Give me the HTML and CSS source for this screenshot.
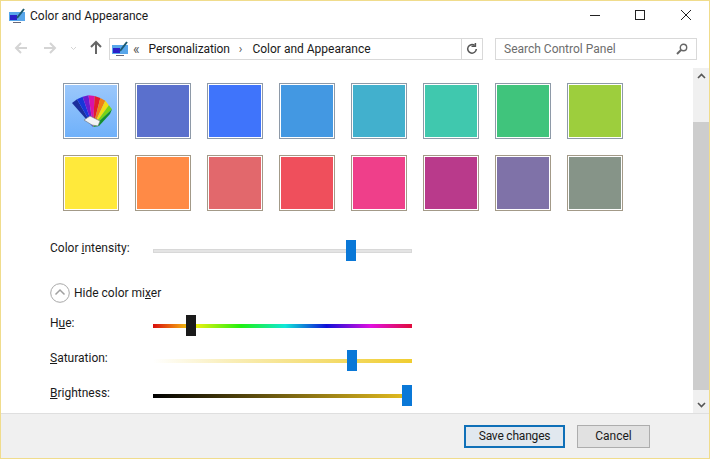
FILE: index.html
```html
<!DOCTYPE html>
<html lang="en">
<head>
    <meta charset="UTF-8">
    <title>Color and Appearance</title>
    <link rel="stylesheet" href="styles.css">
</head>
<body>
<div class="window">
    <header class="titlebar">
        <svg class="cp-icon" width="16" height="16" viewBox="0 0 16 16">
            <rect x="0" y="4" width="16" height="9" fill="#58a6ea"/>
            <rect x="1" y="7" width="7" height="5" fill="#2a20c8"/>
            <path d="M8 10 L15 1" stroke="#1c5a70" stroke-width="2"/>
            <rect x="4" y="14" width="8" height="1" fill="#667"/>
        </svg>
        <span class="title">Color and Appearance</span>
        <div class="caption-btns">
            <svg class="btn-min" width="10" height="10" viewBox="0 0 10 10"><path d="M0 5.5H10" stroke="#222"/></svg>
            <svg width="10" height="10" viewBox="0 0 10 10"><rect x="0.5" y="0.5" width="9" height="9" fill="none" stroke="#222"/></svg>
            <svg width="10" height="10" viewBox="0 0 10 10"><path d="M0 0L10 10M10 0L0 10" stroke="#222"/></svg>
        </div>
    </header>

    <nav class="navbar">
        <svg class="nav-arrow" width="16" height="14" viewBox="0 0 16 14"><path d="M14 7H3M8 2L3 7L8 12" fill="none" stroke="#d4d4d4" stroke-width="2"/></svg>
        <svg class="nav-arrow" width="16" height="14" viewBox="0 0 16 14"><path d="M2 7H13M8 2L13 7L8 12" fill="none" stroke="#d4d4d4" stroke-width="2"/></svg>
        <svg class="nav-drop" width="7" height="5" viewBox="0 0 7 5"><path d="M1 1L3.5 3.5L6 1" fill="none" stroke="#d4d4d4"/></svg>
        <svg class="nav-up" width="14" height="14" viewBox="0 0 14 14"><path d="M7 14V2M2 7L7 2L12 7" fill="none" stroke="#666" stroke-width="2"/></svg>
        <div class="address">
            <svg width="16" height="16" viewBox="0 0 16 16">
                <rect x="0" y="4" width="16" height="9" fill="#58a6ea"/>
                <rect x="1" y="7" width="7" height="5" fill="#2a20c8"/>
                <path d="M8 10 L15 1" stroke="#1c5a70" stroke-width="2"/>
                <rect x="4" y="14" width="8" height="1" fill="#667"/>
            </svg>
            <span class="crumb-more">&laquo;</span>
            <span class="crumb crumb-tight">Personalization</span>
            <span class="crumb-sep">&rsaquo;</span>
            <span class="crumb">Color and Appearance</span>
            <span class="refresh">
                <svg width="12" height="12" viewBox="0 0 12 12"><path d="M8.6 2.4A4.3 4.3 0 1 0 10.3 6" fill="none" stroke="#555" stroke-width="1.5"/><path d="M5.5 3.2H9.4V0" fill="none" stroke="#555" stroke-width="1.5"/></svg>
            </span>
        </div>
        <div class="search">
            <span>Search Control Panel</span>
            <svg width="12" height="12" viewBox="0 0 12 12"><circle cx="7.5" cy="4.5" r="3.2" fill="none" stroke="#666" stroke-width="1.4"/><path d="M5 7L1 11" stroke="#666" stroke-width="2"/></svg>
        </div>
    </nav>

    <div class="body">
        <main class="content">
            <div class="swatches">
                <div class="swatch swatch-auto">
                    <svg width="44" height="44" viewBox="0 0 44 44">
                        <g transform="translate(24 38)">
                            <path d="M0 0L-21 -24L-16 -27.7Z" fill="#1c2f9c"/>
                            <path d="M0 0L-16 -27.7L-10.4 -30.3Z" fill="#1636d8"/>
                            <path d="M0 0L-10.4 -30.3L-4.5 -31.7Z" fill="#6a1cd0"/>
                            <path d="M0 0L-4.5 -31.7L1.6 -31Z" fill="#d812a8"/>
                            <path d="M0 0L1.6 -31L7.3 -29.1Z" fill="#e41c2c"/>
                            <path d="M0 0L7.3 -29.1L12.3 -26.3Z" fill="#f08014"/>
                            <path d="M0 0L12.3 -26.3L15.9 -21.8Z" fill="#f2dc14"/>
                            <path d="M0 0L15.9 -21.8L19 -17.7Z" fill="#78d414"/>
                            <path d="M0 0L19 -17.7L17 -13L6 -1Z" fill="#14902c"/>
                            <path d="M-9 -7L-3 -11L7 -6L5 -1L-1 -2Z" fill="#f2f3f5" stroke="#6a7078" stroke-width="0.6"/>
                        </g>
                    </svg>
                </div>
                <div class="swatch" style="background:#5a70cd"></div>
                <div class="swatch" style="background:#3f74fb"></div>
                <div class="swatch" style="background:#4398e2"></div>
                <div class="swatch" style="background:#42b0cd"></div>
                <div class="swatch" style="background:#40c8ae"></div>
                <div class="swatch" style="background:#40c47c"></div>
                <div class="swatch" style="background:#9dce3d"></div>
                <div class="swatch warm" style="background:#ffe93b"></div>
                <div class="swatch warm" style="background:#ff8a46"></div>
                <div class="swatch warm" style="background:#e2686c"></div>
                <div class="swatch warm" style="background:#ef4f5c"></div>
                <div class="swatch warm" style="background:#ef3f8a"></div>
                <div class="swatch warm" style="background:#b93a8b"></div>
                <div class="swatch warm" style="background:#7f72a8"></div>
                <div class="swatch warm" style="background:#869488"></div>
            </div>

            <div class="row row-intensity">
                <label>Color <u>i</u>ntensity:</label>
                <div class="slider">
                    <div class="track track-grey"></div>
                    <div class="thumb" style="left:193px"></div>
                </div>
            </div>

            <div class="mixer-toggle">
                <svg width="20" height="20" viewBox="0 0 20 20"><circle cx="10" cy="10" r="9.3" fill="#fff" stroke="#a8a8a8"/><path d="M5.5 11.5L10 7L14.5 11.5" fill="none" stroke="#a0a0a0" stroke-width="1.5"/></svg>
                <span>Hide color mi<u>x</u>er</span>
            </div>

            <div class="row row-hue">
                <label>H<u>u</u>e:</label>
                <div class="slider">
                    <div class="track track-hue"></div>
                    <div class="thumb thumb-dark" style="left:33px"></div>
                </div>
            </div>
            <div class="row row-sat">
                <label><u>S</u>aturation:</label>
                <div class="slider">
                    <div class="track track-sat"></div>
                    <div class="thumb" style="left:194px"></div>
                </div>
            </div>
            <div class="row row-bri">
                <label><u>B</u>rightness:</label>
                <div class="slider">
                    <div class="track track-bri"></div>
                    <div class="thumb" style="left:249px"></div>
                </div>
            </div>
        </main>
        <aside class="scrollbar">
            <svg class="sb-arrow" width="9" height="6" viewBox="0 0 9 6"><path d="M1 5L4.5 1.5L8 5" fill="none" stroke="#555" stroke-width="1.6"/></svg>
            <div class="sb-thumb"></div>
            <svg class="sb-arrow" width="9" height="6" viewBox="0 0 9 6"><path d="M1 1L4.5 4.5L8 1" fill="none" stroke="#555" stroke-width="1.6"/></svg>
        </aside>
    </div>

    <footer class="footer">
        <button class="btn btn-default">Save changes</button>
        <button class="btn">Cancel</button>
    </footer>
</div>
</body>
</html>
```

FILE: styles.css
```css
* { box-sizing: border-box; }
html, body {
    margin: 0;
    height: 100%;
}
body {
    font-family: Roboto, "Liberation Sans", sans-serif;
    font-size: 12px;
    color: #1a1a1a;
    background: #fff;
}
.window {
    width: 710px;
    height: 459px;
    display: flex;
    flex-direction: column;
    border: 1px solid #f0dc8c;
    background: #fff;
    overflow: hidden;
}

.titlebar {
    height: 29px;
    flex: none;
    display: flex;
    align-items: center;
    padding-left: 8px;
}
.title { margin-left: 5px; }
.caption-btns {
    margin-left: auto;
    margin-bottom: 1px;
    display: flex;
    gap: 36px;
    padding-right: 18px;
}
.btn-min { margin-right: -1px; }

.navbar {
    height: 22px;
    margin-top: 8px;
    flex: none;
    display: flex;
    align-items: center;
}
.nav-arrow { margin-bottom: 2px; }
.nav-arrow:first-child { margin-left: 12px; }
.nav-arrow + .nav-arrow { margin-left: 13px; }
.nav-drop { margin-left: 12px; margin-bottom: 2px; }
.nav-up { margin-left: 12px; margin-bottom: 4px; }
.address {
    width: 374px;
    height: 22px;
    margin-left: 6px;
    border: 1px solid #d9d9d9;
    display: flex;
    align-items: center;
    padding-left: 2px;
}
.crumb-more { margin-left: 5px; color: #555; font-size: 14px; }
.crumb { margin-left: 9px; }
.crumb-tight { letter-spacing: -0.1px; }
.crumb-sep { margin-left: 9px; margin-right: 1px; color: #555; }
.refresh {
    margin-left: auto;
    width: 21px;
    height: 100%;
    border-left: 1px solid #d9d9d9;
    display: flex;
    align-items: center;
    justify-content: center;
}
.search {
    width: 202px;
    height: 22px;
    margin-left: 12px;
    border: 1px solid #d9d9d9;
    display: flex;
    align-items: center;
    justify-content: space-between;
    padding: 0 8px;
    color: #6d6d6d;
}

.body {
    flex: 1;
    min-height: 0;
    display: flex;
    margin-top: 8px;
}
.content {
    flex: 1;
    padding-left: 49px;
}
.swatches {
    display: grid;
    grid-template-columns: repeat(8, 56px);
    gap: 16px;
    margin: 15px 0 0 13px;
}
.swatch {
    width: 56px;
    height: 56px;
    border: 1px solid #8e9aa8;
    box-shadow: inset 0 0 0 1px #fff;
}
.swatch.warm { border-color: #a39a88; }
.swatch-auto {
    background: linear-gradient(to bottom, #9cc8fb, #6eb0fa);
    display: flex;
    align-items: center;
    justify-content: center;
}

.row {
    display: flex;
    align-items: center;
    height: 21px;
}
.row label { width: 103px; margin-bottom: 6px; }
.row-intensity { margin-top: 29px; }
.row-hue { margin-top: 12px; }
.row-sat { margin-top: 14px; }
.row-bri { margin-top: 14px; }

.slider {
    position: relative;
    width: 259px;
    height: 21px;
}
.track {
    width: 100%;
    height: 4px;
    margin-top: 9px;
}
.track-grey {
    background: #e4e4e4;
    border: 1px solid #d8d8d8;
}
.track-hue {
    background: linear-gradient(to right, #d80d0d 0%, #f09010 10%, #e8f010 17%, #20f010 34%, #10e8d8 51%, #1010d8 67%, #e010e0 84%, #e00d3c 100%);
}
.track-sat {
    background: linear-gradient(to right, #fff 0%, #f9eeb8 30%, #f0cd30 100%);
}
.track-bri {
    background: linear-gradient(to right, #000 0%, #e8c020 100%);
}
.thumb {
    position: absolute;
    top: 0;
    width: 10px;
    height: 21px;
    background: #0a78d7;
}
.thumb-dark { background: #1a1a1a; }

.mixer-toggle {
    display: flex;
    align-items: center;
    gap: 4px;
    margin-top: 22px;
}

.scrollbar {
    width: 16px;
    background: #f0f0f0;
    display: flex;
    flex-direction: column;
    align-items: center;
    justify-content: space-between;
    padding: 5px 0;
}
.sb-thumb {
    width: 16px;
    height: 268px;
    margin-top: 41px;
    margin-bottom: 10px;
    background: #cdcdcd;
}

.footer {
    height: 45px;
    flex: none;
    background: #f0f0f0;
    border-top: 1px solid #dfdfdf;
    display: flex;
    align-items: center;
    justify-content: flex-end;
    gap: 12px;
    padding-right: 59px;
}
.btn {
    width: 73px;
    height: 23px;
    font: inherit;
    color: inherit;
    background: #e1e1e1;
    border: 1px solid #adadad;
    padding: 0;
}
.btn-default {
    width: 101px;
    border: 2px solid #0f70b8;
    background: #e1e8ef;
    letter-spacing: -0.2px;
}
```
